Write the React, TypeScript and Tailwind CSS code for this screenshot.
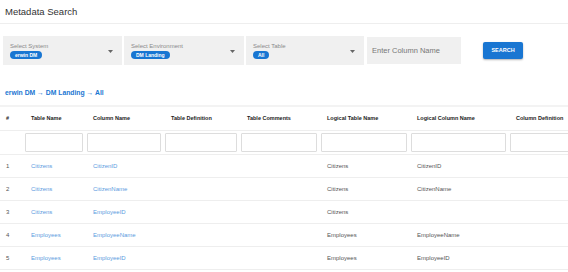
import React from 'react';

const columns = [
  { label: 'Table Name', width: 'w-[62px]' },
  { label: 'Column Name', width: 'w-[78px]' },
  { label: 'Table Definition', width: 'w-[76px]' },
  { label: 'Table Comments', width: 'w-[80px]' },
  { label: 'Logical Table Name', width: 'w-[90px]' },
  { label: 'Logical Column Name', width: 'w-[99px]' },
  { label: 'Column Definition', width: 'w-[90px]' },
];

const rows = [
  { id: 1, table: 'Citizens', column: 'CitizenID', logicalTable: 'Citizens', logicalColumn: 'CitizenID' },
  { id: 2, table: 'Citizens', column: 'CitizenName', logicalTable: 'Citizens', logicalColumn: 'CitizenName' },
  { id: 3, table: 'Citizens', column: 'EmployeeID', logicalTable: 'Citizens', logicalColumn: '' },
  { id: 4, table: 'Employees', column: 'EmployeeName', logicalTable: 'Employees', logicalColumn: 'EmployeeName' },
  { id: 5, table: 'Employees', column: 'EmployeeID', logicalTable: 'Employees', logicalColumn: 'EmployeeID' },
];

function SelectBox({ label, value, width }: { label: string; value: string; width: string }) {
  return (
    <div className={`${width} h-[29px] bg-[#f0f0f0] flex items-center pl-[7px] pr-[9px]`}>
      <div className="flex-1 flex flex-col">
        <span className="text-[6px] leading-[8px] text-[#8a8a8a]">{label}</span>
        <span className="mt-[1px] self-start bg-[#1976d2] text-white text-[5px] font-bold leading-[8px] h-[8px] px-[5px] rounded-full">
          {value}
        </span>
      </div>
      <svg width="5" height="3" viewBox="0 0 5 3" className="mt-[1px]">
        <path d="M0 0h5L2.5 3z" fill="#666" />
      </svg>
    </div>
  );
}

export default function App() {
  return (
    <div className="w-[568px] h-[272px] overflow-hidden bg-white font-['Liberation_Sans',Arial,sans-serif] text-[#333]">
      <div className="h-[24px] border-b border-[#eeeeee] flex items-center pl-[5px]">
        <h1 className="text-[9.5px] text-[#333] leading-none">Metadata Search</h1>
      </div>

      <div className="flex items-center pl-[3px] mt-[12px] gap-[2px]">
        <SelectBox label="Select System" value="erwin DM" width="w-[119px]" />
        <SelectBox label="Select Environment" value="DM Landing" width="w-[120px]" />
        <SelectBox label="Select Table" value="All" width="w-[118px]" />
        <div className="w-[94px] h-[27px] bg-[#f0f0f0] flex items-center pl-[5px] ml-[1px]">
          <span className="text-[7.5px] text-[#777]">Enter Column Name</span>
        </div>
        <button className="ml-[20px] w-[40px] h-[17px] bg-[#1976d2] text-white text-[5.5px] font-bold rounded-[2px] shadow-[0_1px_2px_rgba(0,0,0,0.3)]">
          SEARCH
        </button>
      </div>

      <div className="pl-[5px] mt-[25px] text-[6.8px] font-bold text-[#1976d2] leading-none">
        erwin DM → DM Landing → All
      </div>

      <div className="mt-[8px] border-t-2 border-[#f3f3f3] overflow-hidden">
        <table className="table-fixed w-[598px] border-collapse text-[5.5px]">
          <colgroup>
            <col className="w-[23px]" />
            {columns.map((c) => (
              <col key={c.label} className={c.width} />
            ))}
          </colgroup>
          <thead>
            <tr className="h-[24px] border-b border-[#eeeeee]">
              <th className="text-left pl-[6px] font-bold text-[#222]">#</th>
              {columns.map((c) => (
                <th key={c.label} className="text-left pl-[8px] font-bold text-[#222] whitespace-nowrap">
                  {c.label}
                </th>
              ))}
            </tr>
            <tr className="h-[24px] border-b border-[#eeeeee]">
              <th />
              {columns.map((c) => (
                <th key={c.label} className="px-[2px]">
                  <div className="h-[19px] w-full border border-[#dddddd] rounded-[1px] bg-white" />
                </th>
              ))}
            </tr>
          </thead>
          <tbody className="text-[6px]">
            {rows.map((r) => (
              <tr key={r.id} className="h-[23px] border-b border-[#eeeeee]">
                <td className="pl-[6px] text-[#555]">{r.id}</td>
                <td className="pl-[8px] text-[#5b9be0]">{r.table}</td>
                <td className="pl-[8px] text-[#5b9be0]">{r.column}</td>
                <td />
                <td />
                <td className="pl-[8px] text-[#555]">{r.logicalTable}</td>
                <td className="pl-[8px] text-[#555]">{r.logicalColumn}</td>
                <td />
              </tr>
            ))}
          </tbody>
        </table>
      </div>
    </div>
  );
}
